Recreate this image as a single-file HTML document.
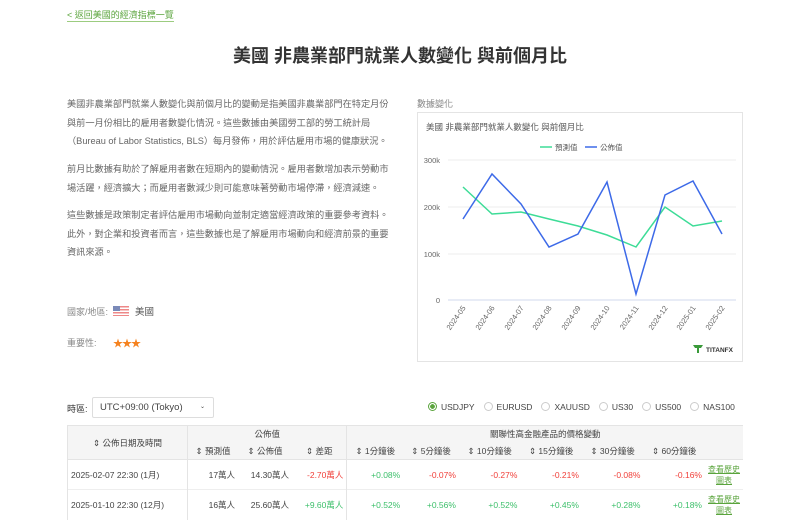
<!DOCTYPE html>
<html><head><meta charset="utf-8"><style>
*{margin:0;padding:0;box-sizing:border-box}
body{width:800px;height:500px;overflow:hidden;background:#fff;font-family:"Liberation Sans","Noto Sans CJK TC",sans-serif;color:#555;position:relative}
.a{position:absolute}
.back{left:67px;top:10px;font-size:9px;color:#5aa43c;border-bottom:1px solid #9ccc80;line-height:11px}
h1{position:absolute;left:0;width:800px;top:42px;text-align:center;font-size:18px;color:#333;font-weight:bold}
.p{left:67px;width:325px;font-size:9.2px;line-height:18.5px;color:#666}
.lab{font-size:9px;color:#888}
.box{left:417px;top:112px;width:326px;height:250px;border:1px solid #e4e4e4}
table{position:absolute;left:67px;top:425px;width:676px;border-collapse:collapse;font-size:8.5px;color:#444}
td,th{font-weight:normal;height:17px;padding:0 3px}
.hd{background:#f5f5f5}
.g{color:#3cbf6a}.r{color:#f0403a}
.lk{color:#5aa43c;text-decoration:underline;font-size:8px;line-height:11px;width:38px;text-align:center}
.rad{display:inline-block;width:9px;height:9px;border:1px solid #ccc;border-radius:50%;vertical-align:-1px;margin-right:4px}
</style></head><body>
<div class="a back">&lt; 返回美國的經濟指標一覽</div>
<h1>美國 非農業部門就業人數變化 與前個月比</h1>
<div class="a p" style="top:95px">美國非農業部門就業人數變化與前個月比的變動是指美國非農業部門在特定月份與前一月份相比的雇用者數變化情況。這些數據由美國勞工部的勞工統計局（Bureau of Labor Statistics, BLS）每月發佈，用於評估雇用市場的健康狀況。</div>
<div class="a p" style="top:160px">前月比數據有助於了解雇用者數在短期內的變動情況。雇用者數增加表示勞動市場活躍，經濟擴大；而雇用者數減少則可能意味著勞動市場停滯，經濟減速。</div>
<div class="a p" style="top:206px">這些數據是政策制定者評估雇用市場動向並制定適當經濟政策的重要參考資料。此外，對企業和投資者而言，這些數據也是了解雇用市場動向和經濟前景的重要資訊來源。</div>
<div class="a lab" style="left:67px;top:305px">國家/地區:</div>
<div class="a" style="left:113px;top:306px;width:16px;height:10px;background:repeating-linear-gradient(#e88 0 1.5px,#fff 1.5px 3px)"><div style="width:7px;height:5px;background:#7a8ab8"></div></div>
<div class="a" style="left:135px;top:304px;font-size:9.5px;color:#555">美國</div>
<div class="a lab" style="left:67px;top:336px">重要性:</div>
<div class="a" style="left:113px;top:335px;font-size:10px;color:#f5821f;letter-spacing:-1px">★★★</div>
<div class="a lab" style="left:417px;top:97px">數據變化</div>
<div class="a box"></div>
<svg class="a" style="left:0;top:0" width="800" height="500">
<text x="426" y="130" font-size="8.5" fill="#555" font-family="Liberation Sans,Noto Sans CJK TC,sans-serif">美國 非農業部門就業人數變化 與前個月比</text>
<line x1="540" y1="147" x2="552" y2="147" stroke="#3ddc97" stroke-width="1.5"/><text x="555" y="150" font-size="7.5" fill="#555">預測值</text>
<line x1="585" y1="147" x2="597" y2="147" stroke="#3d6ae8" stroke-width="1.5"/><text x="600" y="150" font-size="7.5" fill="#555">公佈值</text>
<g stroke="#eee"><line x1="448" y1="160" x2="736" y2="160"/><line x1="448" y1="207" x2="736" y2="207"/><line x1="448" y1="254" x2="736" y2="254"/></g>
<line x1="448" y1="300" x2="736" y2="300" stroke="#d0d8ec"/>
<g font-size="7.5" fill="#666" text-anchor="end"><text x="440" y="163">300k</text><text x="440" y="210">200k</text><text x="440" y="257">100k</text><text x="440" y="303">0</text></g>
<polyline fill="none" stroke="#3ddc97" stroke-width="1.5" points="463,187 492,214 521,212 549,219 578,226 607,235 636,247 665,207 693,226 722,221"/>
<polyline fill="none" stroke="#3d6ae8" stroke-width="1.5" points="463,219 492,174 521,204 549,247 578,234 607,182 636,294 665,195 693,181 722,234"/>
<g font-size="7.5" fill="#666" text-anchor="end">
<text transform="translate(466,308) rotate(-55)">2024-05</text><text transform="translate(495,308) rotate(-55)">2024-06</text><text transform="translate(524,308) rotate(-55)">2024-07</text><text transform="translate(552,308) rotate(-55)">2024-08</text><text transform="translate(581,308) rotate(-55)">2024-09</text><text transform="translate(610,308) rotate(-55)">2024-10</text><text transform="translate(639,308) rotate(-55)">2024-11</text><text transform="translate(668,308) rotate(-55)">2024-12</text><text transform="translate(696,308) rotate(-55)">2025-01</text><text transform="translate(725,308) rotate(-55)">2025-02</text></g>
<path d="M693,345 h10 l-2,3 h-2 v5 h-2 v-5 h-2z" fill="#3a9a3a"/>
<text x="706" y="352" font-size="6.5" font-weight="bold" fill="#333">TITANFX</text>
</svg>
<div class="a" style="left:67px;top:402px;font-size:9px;color:#333">時區:</div>
<div class="a" style="left:92px;top:397px;width:122px;height:21px;border:1px solid #ddd;border-radius:2px;font-size:9.5px;color:#444;padding:4px 7px">UTC+09:00 (Tokyo)<span style="position:absolute;right:8px;top:5px;font-size:6px">⌄</span></div>
<div class="a" style="left:428px;top:402px;font-size:8.5px;color:#444;white-space:nowrap">
<span class="rad" style="border-color:#5aa43c;background:radial-gradient(#5aa43c 45%,#fff 50%)"></span>USDJPY<span style="margin-left:9px" class="rad"></span>EURUSD<span style="margin-left:9px" class="rad"></span>XAUUSD<span style="margin-left:9px" class="rad"></span>US30<span style="margin-left:9px" class="rad"></span>US500<span style="margin-left:9px" class="rad"></span>NAS100</div>
<table>
<tr class="hd" style="border-top:1px solid #e4e4e4"><th rowspan="2" style="width:120px;border-right:1px solid #e4e4e4;border-left:1px solid #e4e4e4">⇕ 公佈日期及時間</th><th colspan="3" style="border-right:1px solid #e4e4e4">公佈值</th><th colspan="7">關聯性高金融產品的價格變動</th></tr>
<tr class="hd" style="border-bottom:1px solid #e4e4e4"><th>⇕ 預測值</th><th>⇕ 公佈值</th><th style="border-right:1px solid #e4e4e4">⇕ 差距</th><th>⇕ 1分鐘後</th><th>⇕ 5分鐘後</th><th>⇕ 10分鐘後</th><th>⇕ 15分鐘後</th><th>⇕ 30分鐘後</th><th>⇕ 60分鐘後</th><th></th></tr>
<tr style="height:30px;border-bottom:1px solid #eee"><td style="border-left:1px solid #e4e4e4;border-right:1px solid #e4e4e4">2025-02-07 22:30 (1月)</td><td style="text-align:right">17萬人</td><td style="text-align:right">14.30萬人</td><td class="r" style="text-align:right;border-right:1px solid #e4e4e4">-2.70萬人</td><td class="g" style="text-align:right">+0.08%</td><td class="r" style="text-align:right">-0.07%</td><td class="r" style="text-align:right">-0.27%</td><td class="r" style="text-align:right">-0.21%</td><td class="r" style="text-align:right">-0.08%</td><td class="r" style="text-align:right">-0.16%</td><td class="lk">查看歷史圖表</td></tr>
<tr style="height:30px"><td style="border-left:1px solid #e4e4e4;border-right:1px solid #e4e4e4">2025-01-10 22:30 (12月)</td><td style="text-align:right">16萬人</td><td style="text-align:right">25.60萬人</td><td class="g" style="text-align:right;border-right:1px solid #e4e4e4">+9.60萬人</td><td class="g" style="text-align:right">+0.52%</td><td class="g" style="text-align:right">+0.56%</td><td class="g" style="text-align:right">+0.52%</td><td class="g" style="text-align:right">+0.45%</td><td class="g" style="text-align:right">+0.28%</td><td class="g" style="text-align:right">+0.18%</td><td class="lk">查看歷史圖表</td></tr>
</table>
</body></html>
